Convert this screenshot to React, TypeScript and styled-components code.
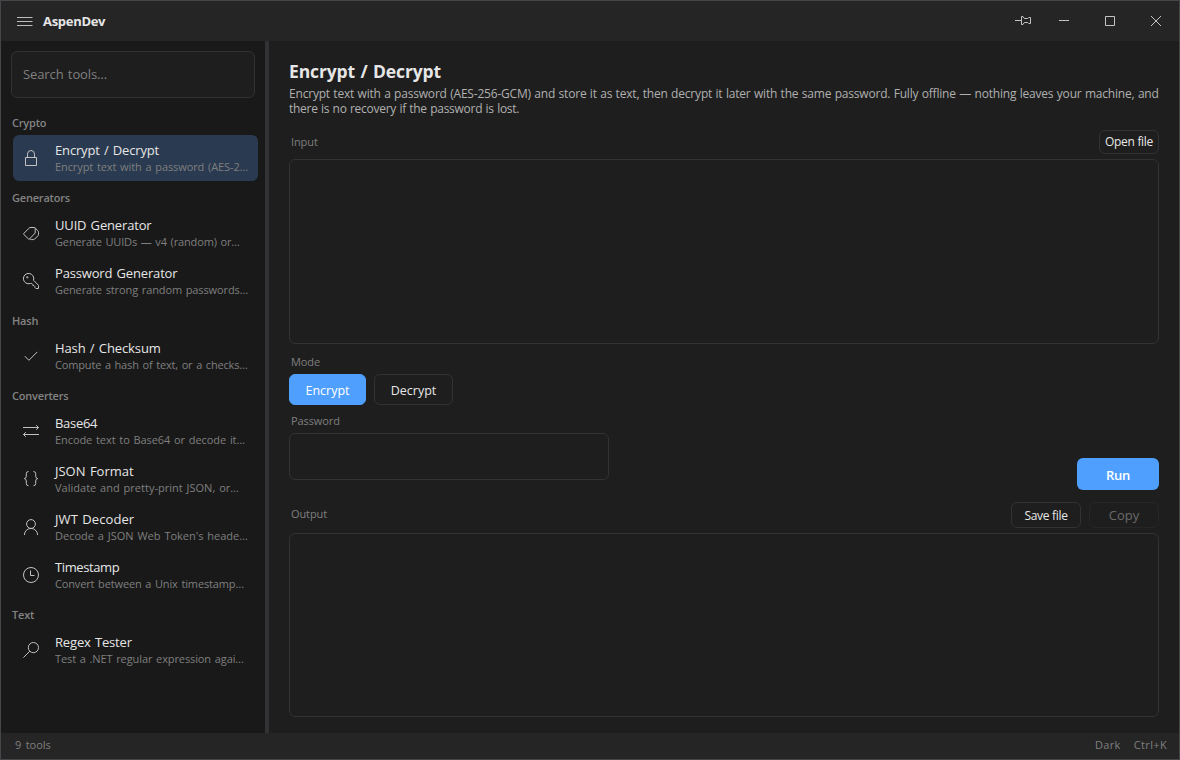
import React from "react";
import styled, { createGlobalStyle } from "styled-components";

const GlobalStyle = createGlobalStyle`
  * { box-sizing: border-box; }
  body { margin: 0; background: #1e1e1e; }
  button, input, textarea { font-family: inherit; }
`;

const Window = styled.div`
  width: 1180px;
  height: 760px;
  display: flex;
  flex-direction: column;
  border: 1px solid #46464a;
  background: #1e1e1e;
  color: #e6e6e6;
  font-family: "Open Sans", "Noto Sans", sans-serif;
  font-size: 13px;
  overflow: hidden;
  white-space: nowrap;
`;

const TitleBar = styled.header`
  height: 40px;
  flex: none;
  display: flex;
  align-items: center;
  background: #252525;
`;

const MenuButton = styled.button`
  width: 42px;
  height: 40px;
  padding: 0 0 0 16px;
  border: 0;
  background: none;
  color: #bdbdbd;
  display: flex;
  align-items: center;
`;

const AppName = styled.div`
  flex: 1;
  font-weight: 700;
  font-size: 13px;
  line-height: 18px;
  letter-spacing: -0.3px;
`;

const CaptionButton = styled.button<{ $width?: number }>`
  width: ${(p) => p.$width ?? 46}px;
  height: 40px;
  padding: 0;
  border: 0;
  background: none;
  color: #c4c4c4;
  display: flex;
  align-items: center;
  justify-content: center;
`;

const Body = styled.div`
  flex: 1;
  min-height: 0;
  display: flex;
`;

const Sidebar = styled.nav`
  width: 264px;
  flex: none;
  padding: 10px 7px 0 10px;
  background: #191919;
`;

const Splitter = styled.div`
  width: 4px;
  flex: none;
  background: #323235;
`;

const SearchInput = styled.input`
  display: block;
  width: 244px;
  height: 47px;
  margin-bottom: 9px;
  padding: 0 11px 2px;
  border: 1px solid #323235;
  border-radius: 6px;
  outline: 0;
  background: #1e1e1e;
  color: #e6e6e6;
  font-size: 13px;
  letter-spacing: -0.1px;
  word-spacing: 1px;
  &::placeholder { color: #808080; opacity: 1; }
`;

const Group = styled.section`
  display: flex;
  flex-direction: column;
`;

const GroupTitle = styled.h2`
  margin: 0;
  padding: 8px 0 4px 1px;
  font-size: 11px;
  line-height: 15px;
  font-weight: 600;
  letter-spacing: -0.2px;
  color: #838383;
`;

const ToolRow = styled.a<{ $selected?: boolean }>`
  display: flex;
  align-items: center;
  height: 46px;
  margin: 1px 0 1px 2px;
  padding-left: 10px;
  border-radius: 6px;
  background: ${(p) => (p.$selected ? "#2a3a50" : "transparent")};
  color: #c2c2c2;
`;

const ToolText = styled.div`
  margin-left: 16px;
  padding-bottom: 1px;
`;

const ToolName = styled.div<{ $track?: number }>`
  font-size: 13px;
  line-height: 18px;
  letter-spacing: ${(p) => p.$track ?? -0.16}px;
  word-spacing: 1px;
  color: #e6e6e6;
`;

const ToolHint = styled.div<{ $track: number }>`
  font-size: 11px;
  line-height: 15px;
  letter-spacing: ${(p) => p.$track}px;
  word-spacing: 1px;
  color: #7f7f7f;
`;

const Main = styled.main`
  flex: 1;
  min-width: 0;
  display: flex;
  flex-direction: column;
  padding: 18px 20px 16px;
`;

const PageTitle = styled.h1`
  margin: 0 0 3px;
  font-size: 17.5px;
  line-height: 24px;
  font-weight: 700;
  letter-spacing: -0.12px;
  word-spacing: 1px;
`;

const Description = styled.p`
  margin: 0 0 14px;
  font-size: 12px;
  line-height: 15px;
  color: #b0b0b0;
`;

const DescriptionLine = styled.span<{ $track: number }>`
  display: block;
  letter-spacing: ${(p) => p.$track}px;
  word-spacing: 0.5px;
`;

const FieldHeader = styled.div<{ $height: number }>`
  display: flex;
  align-items: center;
  height: ${(p) => p.$height}px;
  margin-bottom: 5px;
`;

const Label = styled.label<{ $lift?: number }>`
  display: block;
  flex: ${(p) => (p.$lift ? 1 : "none")};
  padding-left: 2px;
  padding-bottom: ${(p) => p.$lift ?? 0}px;
  font-size: 11px;
  line-height: 15px;
  letter-spacing: -0.1px;
  color: #7f7f7f;
`;

const TextArea = styled.textarea`
  display: block;
  width: 100%;
  margin: 0;
  flex: 1 1 0;
  border: 1px solid #323235;
  border-radius: 6px;
  outline: 0;
  resize: none;
  background: #1e1e1e;
  color: #e6e6e6;
`;

const InputArea = styled(TextArea)`
  flex: none;
  height: 185px;
`;

const SmallButton = styled.button<{ $width: number; $height: number }>`
  width: ${(p) => p.$width}px;
  height: ${(p) => p.$height}px;
  padding: ${(p) => (p.$height > 24 ? 2 : 0)}px 0 0;
  border: 1px solid #323235;
  border-radius: 6px;
  background: #1e1e1e;
  color: #e6e6e6;
  font-size: 12px;
  line-height: 16px;
  letter-spacing: -0.3px;
  &:disabled {
    margin-left: 8px;
    padding-top: 0;
    border-color: #262627;
    color: #6a6a6a;
    font-size: 13px;
    letter-spacing: 0;
  }
`;

const Controls = styled.div`
  display: flex;
  justify-content: space-between;
  align-items: flex-end;
  margin: 10px 0 12px;
`;

const Options = styled.div`
  padding-bottom: 10px;
`;

const ModeSwitch = styled.div`
  display: flex;
  gap: 8px;
  margin: 5px 0 8px;
`;

const ModeButton = styled.button<{ $active?: boolean }>`
  width: ${(p) => (p.$active ? 77 : 79)}px;
  height: 31px;
  padding: 2px 0 0;
  border: 1px solid ${(p) => (p.$active ? "#4f9fff" : "#323235")};
  border-radius: 6px;
  background: ${(p) => (p.$active ? "#4f9fff" : "#1e1e1e")};
  color: ${(p) => (p.$active ? "#fff" : "#e6e6e6")};
  font-size: 12.5px;
`;

const PasswordInput = styled.input`
  display: block;
  width: 320px;
  height: 47px;
  margin-top: 5px;
  padding: 0 11px;
  border: 1px solid #323235;
  border-radius: 6px;
  outline: 0;
  background: #1e1e1e;
  color: #e6e6e6;
`;

const RunButton = styled.button`
  width: 82px;
  height: 32px;
  padding: 2px 0 0;
  border: 0;
  border-radius: 6px;
  background: #4f9fff;
  color: #fff;
  font-size: 13px;
  font-weight: 600;
  letter-spacing: -0.2px;
`;

const StatusBar = styled.footer`
  height: 26px;
  flex: none;
  display: flex;
  align-items: center;
  padding: 0 12px 3px 14px;
  background: #252525;
  color: #7f7f7f;
  font-size: 11px;
  line-height: 15px;
`;

const StatusCount = styled.span`
  flex: 1;
  word-spacing: 1.5px;
`;

const StatusItem = styled.span`
  margin-left: 13px;
  letter-spacing: 0.35px;
`;

const Glyph = styled.svg`
  display: block;
  flex: none;
  fill: none;
  stroke: currentColor;
  stroke-width: 1;
`;

type Tool = {
  name: string;
  hint: string;
  track?: number;
  hintTrack: number;
  icon: React.ReactNode;
};

const groups: { title: string; tools: Tool[] }[] = [
  {
    title: "Crypto",
    tools: [
      {
        name: "Encrypt / Decrypt",
        hint: "Encrypt text with a password (AES-2…",
        hintTrack: -0.09,
        icon: <path d="M2.5 7.5h11v8h-11zM4.5 7.5V4.2a3.5 3.7 0 0 1 7 0v3.3" />,
      },
    ],
  },
  {
    title: "Generators",
    tools: [
      {
        name: "UUID Generator",
        hint: "Generate UUIDs — v4 (random) or…",
        hintTrack: -0.14,
        icon: <path d="M.6 8.6 6.8 2.5h4.4q1 0 1 1V8l-5.7 6q-.5.5-1 0L.6 9.2zM12.2 3l2.6 2.6q.7.8.7 2v1.8q0 .8-.6 1.4l-3.2 3.2q-.6.6-1.4.6H8.4q-1 0-1.8-.7" />,
      },
      {
        name: "Password Generator",
        hint: "Generate strong random passwords…",
        hintTrack: -0.11,
        icon: (
          <>
            <path d="M10.5 7.3A5.2 5.2 0 1 0 7.3 10.5l1.5-.1 1 1.1v1h1.1l1 1v1l1 1h2.6v-3.2z" />
            <circle cx="4.3" cy="4.3" r=".7" />
          </>
        ),
      },
    ],
  },
  {
    title: "Hash",
    tools: [
      {
        name: "Hash / Checksum",
        hint: "Compute a hash of text, or a checks…",
        track: -0.1,
        hintTrack: -0.16,
        icon: <path d="m1.8 8.2 4.1 4.1 8.4-8.4" />,
      },
    ],
  },
  {
    title: "Converters",
    tools: [
      {
        name: "Base64",
        hint: "Encode text to Base64 or decode it…",
        track: -0.3,
        hintTrack: -0.07,
        icon: <path d="M0 4.5h15.5M13.2 2.2l2.3 2.3-2.3 2.3M16 11.5H.5M2.8 9.2.5 11.5l2.3 2.3" />,
      },
      {
        name: "JSON Format",
        hint: "Validate and pretty-print JSON, or…",
        track: 0,
        hintTrack: 0.01,
        icon: <path d="M5.5.5q-2.2 0-2.2 2v2.7q0 2.1-2 2.4 2 .3 2 2.4v2.7q0 2 2.2 2M10.5.5q2.2 0 2.2 2v2.7q0 2.1 2 2.4-2 .3-2 2.4v2.7q0 2-2.2 2" />,
      },
      {
        name: "JWT Decoder",
        hint: "Decode a JSON Web Token's heade…",
        track: 0.08,
        hintTrack: 0,
        icon: (
          <>
            <circle cx="8" cy="5" r="4.4" />
            <path d="M1.4 16a6.6 6.6 0 0 1 13.2 0" />
          </>
        ),
      },
      {
        name: "Timestamp",
        hint: "Convert between a Unix timestamp…",
        track: -0.4,
        hintTrack: -0.14,
        icon: (
          <>
            <circle cx="8" cy="8" r="7.5" />
            <path d="M7.5 3.5v5h4" />
          </>
        ),
      },
    ],
  },
  {
    title: "Text",
    tools: [
      {
        name: "Regex Tester",
        hint: "Test a .NET regular expression agai…",
        hintTrack: -0.1,
        icon: (
          <>
            <circle cx="10.4" cy="5.6" r="5.1" />
            <path d="M6.8 9.2.4 15.6" />
          </>
        ),
      },
    ],
  },
];

function ToolEntry({ tool, selected }: { tool: Tool; selected: boolean }) {
  return (
    <ToolRow $selected={selected}>
      <Glyph width="16" height="16" viewBox="0 0 16 16">{tool.icon}</Glyph>
      <ToolText>
        <ToolName $track={tool.track}>{tool.name}</ToolName>
        <ToolHint $track={tool.hintTrack}>{tool.hint}</ToolHint>
      </ToolText>
    </ToolRow>
  );
}

export default function App() {
  return (
    <>
      <GlobalStyle />
      <Window>
        <TitleBar>
          <MenuButton aria-label="Menu">
            <Glyph width="16" height="10" viewBox="0 0 16 10">
              <path d="M0 1.5H15.5M0 5.5H15.5M0 9.5H15.5" />
            </Glyph>
          </MenuButton>
          <AppName>AspenDev</AppName>
          <CaptionButton $width={36} aria-label="Pin">
            <Glyph width="16" height="16" viewBox="0 0 16 16">
              <path d="M0 7.5h6M6.5 3.5H8l1.3 2h3.4l1-1h1.8v6h-1.8l-1-1H9.3l-1.3 2H6.5z" />
            </Glyph>
          </CaptionButton>
          <CaptionButton aria-label="Minimize">
            <Glyph width="10" height="10" viewBox="0 0 10 10"><path d="M0 4.5h10" /></Glyph>
          </CaptionButton>
          <CaptionButton aria-label="Maximize">
            <Glyph width="10" height="10" viewBox="0 0 10 10"><path d="M.5.5h9v9h-9z" /></Glyph>
          </CaptionButton>
          <CaptionButton aria-label="Close">
            <Glyph width="10" height="10" viewBox="0 0 10 10"><path d="m0 0 10 10M10 0 0 10" /></Glyph>
          </CaptionButton>
        </TitleBar>
        <Body>
          <Sidebar>
            <SearchInput placeholder="Search tools…" />
            {groups.map((group) => (
              <Group key={group.title}>
                <GroupTitle>{group.title}</GroupTitle>
                {group.tools.map((tool) => (
                  <ToolEntry key={tool.name} tool={tool} selected={group.title === "Crypto"} />
                ))}
              </Group>
            ))}
          </Sidebar>
          <Splitter />
          <Main>
            <PageTitle>Encrypt / Decrypt</PageTitle>
            <Description>
              <DescriptionLine $track={-0.195}>
                Encrypt text with a password (AES-256-GCM) and store it as text, then decrypt it later with the same
                password. Fully offline — nothing leaves your machine, and
              </DescriptionLine>
              <DescriptionLine $track={-0.27}>there is no recovery if the password is lost.</DescriptionLine>
            </Description>
            <FieldHeader $height={24}>
              <Label $lift={1}>Input</Label>
              <SmallButton $width={60} $height={24}>Open file</SmallButton>
            </FieldHeader>
            <InputArea />
            <Controls>
              <Options>
                <Label>Mode</Label>
                <ModeSwitch>
                  <ModeButton $active>Encrypt</ModeButton>
                  <ModeButton>Decrypt</ModeButton>
                </ModeSwitch>
                <Label>Password</Label>
                <PasswordInput type="password" />
              </Options>
              <RunButton>Run</RunButton>
            </Controls>
            <FieldHeader $height={26}>
              <Label $lift={3}>Output</Label>
              <SmallButton $width={70} $height={26}>Save file</SmallButton>
              <SmallButton $width={70} $height={26} disabled>Copy</SmallButton>
            </FieldHeader>
            <TextArea readOnly />
          </Main>
        </Body>
        <StatusBar>
          <StatusCount>9 tools</StatusCount>
          <StatusItem>Dark</StatusItem>
          <StatusItem>Ctrl+K</StatusItem>
        </StatusBar>
      </Window>
    </>
  );
}
